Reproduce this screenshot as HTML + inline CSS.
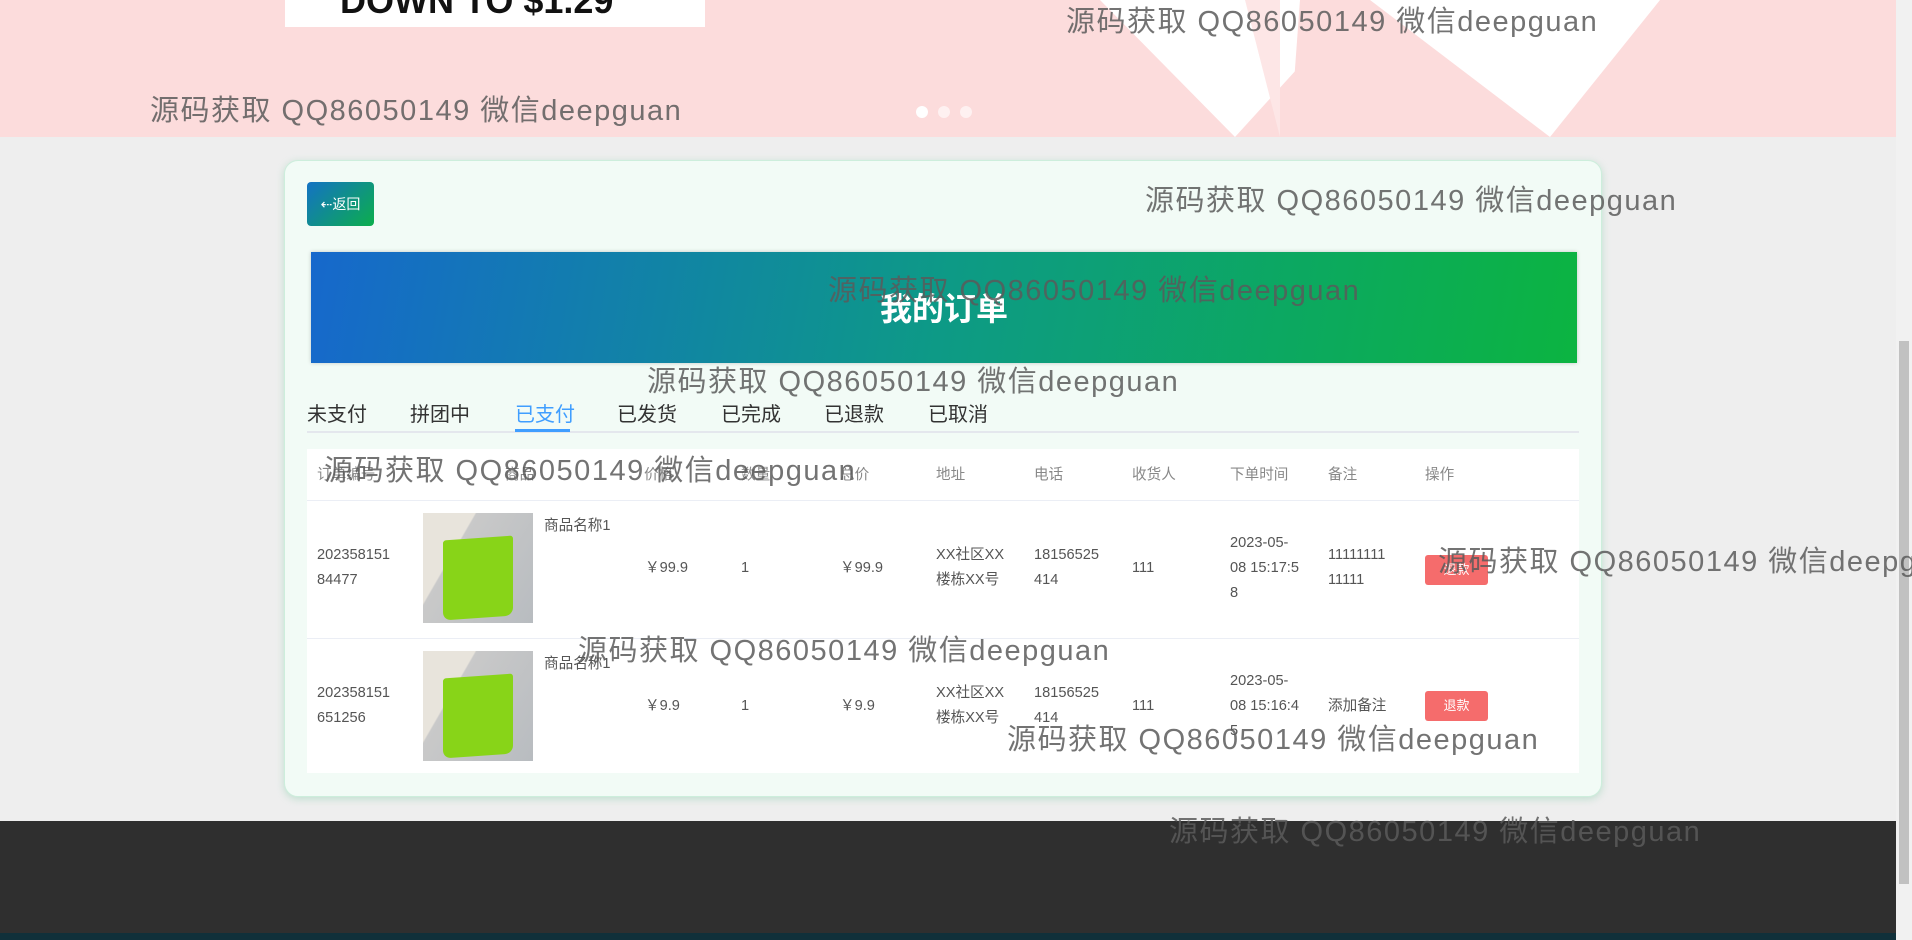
<!DOCTYPE html>
<html><head><meta charset="utf-8"><style>
*{margin:0;padding:0;box-sizing:border-box}
body{width:1912px;height:940px;overflow:hidden;position:relative;background:#eeeeee;font-family:"Liberation Sans","Noto Sans CJK SC",sans-serif;color:#333}
.banner{position:absolute;left:0;top:0;width:1896px;height:137px;background:#fcdcdc;overflow:hidden}
.wm{position:absolute;font-size:29px;color:rgba(90,90,90,.85);white-space:nowrap;line-height:36px;letter-spacing:1.5px}
.card{position:absolute;left:284px;top:160px;width:1318px;height:637px;background:#f2fbf6;border:1px solid #cdeedc;border-radius:14px;box-shadow:0 2px 8px rgba(120,200,160,.4)}
.back{position:absolute;left:307px;top:182px;width:67px;height:44px;border-radius:4px;background:linear-gradient(135deg,#1472c4,#0cae4c);color:#fff;font-size:14px;line-height:44px;text-align:center}
.hero{position:absolute;left:311px;top:252px;width:1266px;height:111px;background:linear-gradient(100deg,#1668cc,#0d9a86 50%,#0cb441);box-shadow:0 0 4px rgba(0,0,0,.2);color:#fff;font-size:32px;font-weight:bold;text-align:center;line-height:115px}
.tab{position:absolute;top:398px;font-size:20px;color:#333}
.tabline{position:absolute;left:307px;top:431px;width:1272px;height:2px;background:#e4e7ed}
.tabact{position:absolute;left:515px;top:429px;width:55px;height:3px;background:#409eff}
.table{position:absolute;left:307px;top:449px;width:1272px;height:324px;background:#fff}
.c{position:absolute;font-size:14.6px;color:#555;line-height:25px}
.h{color:#888;top:463px}
.rowline{position:absolute;left:307px;width:1272px;height:1px;background:#ebeef5}
.img{position:absolute;left:423px;width:110px;height:110px;background:linear-gradient(120deg,#e8e4dc 0,#e8e4dc 30%,#c9c9c9 31%,#b8bcc0 100%)}
.img i{position:absolute;left:20px;top:25px;width:70px;height:80px;background:#88d418;border-radius:3px 3px 8px 8px;transform:skewY(-4deg)}
.btn{position:absolute;left:1425px;width:63px;height:30px;background:#f56c6c;border-radius:3px;color:#fff;font-size:13px;text-align:center;line-height:30px}
.foot{position:absolute;left:0;top:821px;width:1896px;height:112px;background:#2f2f2f}
.foot2{position:absolute;left:0;top:933px;width:1912px;height:7px;background:#10303a}
.sb{position:absolute;left:1896px;top:0;width:16px;height:940px;background:#f1f1f1}
.sbt{position:absolute;left:1899px;top:341px;width:10px;height:543px;background:#c1c1c1}
</style></head><body>
<div class="banner">
<div style="position:absolute;left:285px;top:0;width:420px;height:27px;background:#fff;overflow:hidden"><div style="font-size:36px;font-weight:bold;color:#111;line-height:36px;margin-top:-17px;padding-left:55px">DOWN TO $1.29</div></div>
<svg style="position:absolute;left:1100px;top:0" width="600" height="137"><polygon points="0,0 260,0 135,137" fill="#fff"/><polygon points="145,0 180,0 180,137" fill="#fde6e6"/><polygon points="270,0 560,0 450,137" fill="#fff"/><polygon points="200,0 270,0 255,137 190,137" fill="#fcdcdc"/></svg>
<div style="position:absolute;left:916px;top:106px;width:12px;height:12px;border-radius:6px;background:#fff"></div>
<div style="position:absolute;left:938px;top:106px;width:12px;height:12px;border-radius:6px;background:#fff;opacity:.6"></div>
<div style="position:absolute;left:960px;top:106px;width:12px;height:12px;border-radius:6px;background:#fff;opacity:.6"></div>
</div>
<div class="card"></div>
<div class="back">&#8672;返回</div>
<div class="hero">我的订单</div>
<div class="tab" style="left:307px">未支付</div>
<div class="tab" style="left:410px">拼团中</div>
<div class="tab" style="left:515px;color:#409eff">已支付</div>
<div class="tab" style="left:617px">已发货</div>
<div class="tab" style="left:721px">已完成</div>
<div class="tab" style="left:824px">已退款</div>
<div class="tab" style="left:928px">已取消</div>
<div class="tabline"></div><div class="tabact"></div>
<div class="table"></div>
<div class="c h" style="left:317px">订单编号</div><div class="c h" style="left:505px">商品</div><div class="c h" style="left:644px">价格</div><div class="c h" style="left:741px">数量</div><div class="c h" style="left:840px">总价</div><div class="c h" style="left:936px">地址</div><div class="c h" style="left:1034px">电话</div><div class="c h" style="left:1132px">收货人</div><div class="c h" style="left:1230px">下单时间</div><div class="c h" style="left:1328px">备注</div><div class="c h" style="left:1425px">操作</div>
<div class="rowline" style="top:500px"></div>
<div class="rowline" style="top:638px"></div>
<div class="c" style="left:317px;top:543px">202358151<br>84477</div>
<div class="img" style="top:513px"><i></i></div>
<div class="c" style="left:544px;top:514px">商品名称1</div>
<div class="c" style="left:645px;top:556px">￥99.9</div><div class="c" style="left:741px;top:556px">1</div><div class="c" style="left:840px;top:556px">￥99.9</div>
<div class="c" style="left:936px;top:543px">XX社区XX<br>楼栋XX号</div><div class="c" style="left:1034px;top:543px">18156525<br>414</div><div class="c" style="left:1132px;top:556px">111</div>
<div class="c" style="left:1230px;top:531px">2023-05-<br>08 15:17:5<br>8</div><div class="c" style="left:1328px;top:543px">11111111<br>11111</div>
<div class="btn" style="top:555px">退款</div>
<div class="c" style="left:317px;top:681px">202358151<br>651256</div>
<div class="img" style="top:651px"><i></i></div>
<div class="c" style="left:544px;top:652px">商品名称1</div>
<div class="c" style="left:645px;top:694px">￥9.9</div><div class="c" style="left:741px;top:694px">1</div><div class="c" style="left:840px;top:694px">￥9.9</div>
<div class="c" style="left:936px;top:681px">XX社区XX<br>楼栋XX号</div><div class="c" style="left:1034px;top:681px">18156525<br>414</div><div class="c" style="left:1132px;top:694px">111</div>
<div class="c" style="left:1230px;top:669px">2023-05-<br>08 15:16:4<br>5</div><div class="c" style="left:1328px;top:694px">添加备注</div>
<div class="btn" style="top:691px">退款</div>
<div class="foot"></div><div class="foot2"></div>
<div class="sb"></div><div class="sbt"></div>
<div class="wm" style="left:1066px;top:4px">源码获取 QQ86050149 微信deepguan</div>
<div class="wm" style="left:150px;top:93px">源码获取 QQ86050149 微信deepguan</div>
<div class="wm" style="left:1145px;top:183px">源码获取 QQ86050149 微信deepguan</div>
<div class="wm" style="left:828px;top:273px">源码获取 QQ86050149 微信deepguan</div>
<div class="wm" style="left:647px;top:364px">源码获取 QQ86050149 微信deepguan</div>
<div class="wm" style="left:324px;top:453px">源码获取 QQ86050149 微信deepguan</div>
<div class="wm" style="left:1438px;top:544px">源码获取 QQ86050149 微信deepguan</div>
<div class="wm" style="left:578px;top:633px">源码获取 QQ86050149 微信deepguan</div>
<div class="wm" style="left:1007px;top:722px">源码获取 QQ86050149 微信deepguan</div>
<div class="wm" style="left:1169px;top:814px">源码获取 QQ86050149 微信deepguan</div>
</body></html>
